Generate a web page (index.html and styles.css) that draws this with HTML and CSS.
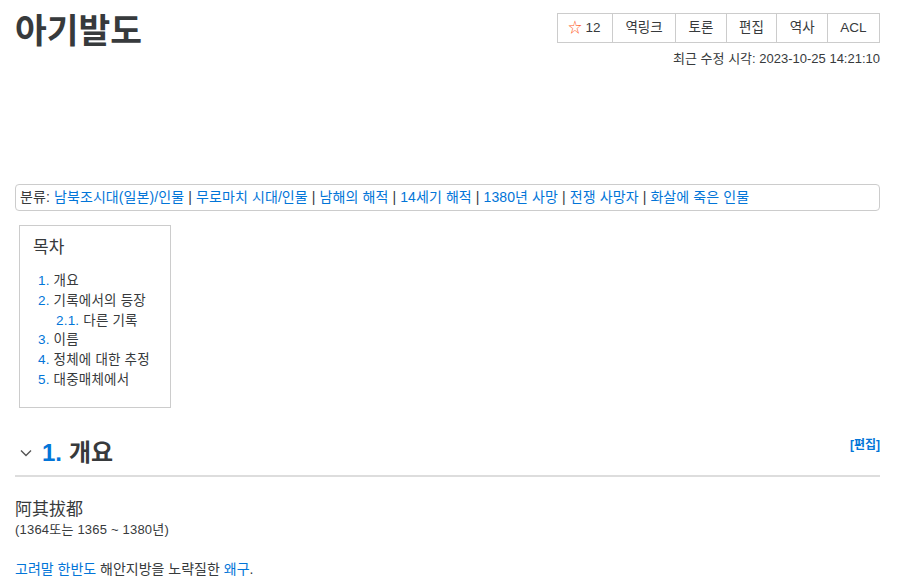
FILE: index.html
```html
<!DOCTYPE html>
<html lang="ko">
<head>
<meta charset="utf-8">
<link rel="stylesheet" href="styles.css">
</head>
<body>
<div class="page">
  <div class="top">
    <h1 class="title">아기발도</h1>
    <div class="tools">
      <div class="btns">
        <a class="btn star"><span class="star-ico">☆</span> 12</a>
        <a class="btn">역링크</a>
        <a class="btn">토론</a>
        <a class="btn">편집</a>
        <a class="btn">역사</a>
        <a class="btn">ACL</a>
      </div>
      <div class="modified">최근 수정 시각: 2023-10-25 14:21:10</div>
    </div>
  </div>
  <div class="ad"></div>
  <div class="cats">분류: <a>남북조시대(일본)/인물</a> | <a>무로마치 시대/인물</a> | <a>남해의 해적</a> | <a>14세기 해적</a> | <a>1380년 사망</a> | <a>전쟁 사망자</a> | <a>화살에 죽은 인물</a></div>
  <div class="toc">
    <div class="toc-title">목차</div>
    <ul class="toc-list">
      <li><a>1.</a> 개요</li>
      <li><a>2.</a> 기록에서의 등장</li>
      <li class="sub"><a>2.1.</a> 다른 기록</li>
      <li><a>3.</a> 이름</li>
      <li><a>4.</a> 정체에 대한 추정</li>
      <li><a>5.</a> 대중매체에서</li>
    </ul>
  </div>
  <h2 class="sec">
    <span class="chev"><svg width="14" height="14" viewBox="0 0 14 14"><path d="M2 4.5 L7 9.5 L12 4.5" fill="none" stroke="#555" stroke-width="1.4"/></svg></span>
    <span class="num">1.</span> 개요
    <a class="edit">[편집]</a>
  </h2>
  <div class="content">
    <div class="hanja">阿其拔都</div>
    <div class="years">(1364또는 1365 ~ 1380년)</div>
    <p class="desc"><a>고려말</a> <a>한반도</a> 해안지방을 노략질한 <a>왜구</a>.</p>
  </div>
</div>
</body>
</html>
```
FILE: styles.css
```css
html, body {
  margin: 0;
  padding: 0;
  background: #fff;
}
body {
  font-family: "Liberation Sans", "Noto Sans CJK KR", sans-serif;
  color: #373a3c;
  font-size: 14px;
}
a {
  color: #0275d8;
  text-decoration: none;
}
.page {
  padding: 0 20px 0 15px;
}
.top {
  display: flex;
  justify-content: space-between;
  align-items: flex-start;
}
.title {
  margin: 0;
  padding-top: 6px;
  font-family: "Noto Sans CJK KR", sans-serif;
  font-size: 34.5px;
  font-weight: 700;
  line-height: 44px;
  color: #373a3c;
}
.tools {
  display: flex;
  flex-direction: column;
  align-items: flex-end;
  padding-top: 13px;
}
.btns {
  display: flex;
  border: 1px solid #ccc;
}
.btn {
  color: #373a3c;
  font-size: 13.5px;
  height: 28px;
  line-height: 28px;
  padding: 0 12.4px;
  border-left: 1px solid #ccc;
}
.btn:first-child {
  border-left: none;
}
.btn.star {
  padding: 0 11.5px 0 10.5px;
}
.star-ico {
  color: #ff5a1f;
}
.modified {
  font-size: 13px;
  margin-top: 8px;
  line-height: 16px;
}
.ad {
  height: 117px;
}
.cats {
  border: 1px solid #ccc;
  border-radius: 4px;
  padding: 0 4px;
  height: 25px;
  line-height: 25px;
  font-size: 14px;
  letter-spacing: 0.1px;
}
.toc {
  margin: 14px 0 0 4px;
  width: 124px;
  border: 1px solid #ccc;
  padding: 11px 13px 17px 13px;
}
.toc-title {
  font-size: 17px;
  line-height: 22px;
  margin-top: 0;
}
.toc-list {
  list-style: none;
  margin: 12px 0 0 0;
  padding: 0 0 0 5px;
  font-size: 13.5px;
  line-height: 19.8px;
  letter-spacing: 0.2px;
}
.toc-list .sub {
  padding-left: 18px;
}
.sec {
  display: flex;
  align-items: center;
  margin: 30px 0 0 0;
  padding-bottom: 7px;
  border-bottom: 2px solid #ddd;
  font-size: 24px;
  font-weight: 700;
  line-height: 30px;
  color: #373a3c;
}
.chev {
  display: inline-flex;
  width: 23px;
  padding-left: 4px;
}
.sec .num {
  color: #0275d8;
  margin-right: 7px;
}
.edit {
  margin-left: auto;
  font-size: 12px;
  align-self: flex-start;
  line-height: 14px;
}
.content {
  padding-top: 19px;
}
.hanja {
  font-family: "Noto Sans CJK KR", sans-serif;
  font-size: 17px;
  line-height: 23px;
}
.years {
  font-size: 13px;
  line-height: 21px;
  letter-spacing: 0.2px;
}
.desc {
  margin: 19px 0 0 0;
  line-height: 20px;
}
```
